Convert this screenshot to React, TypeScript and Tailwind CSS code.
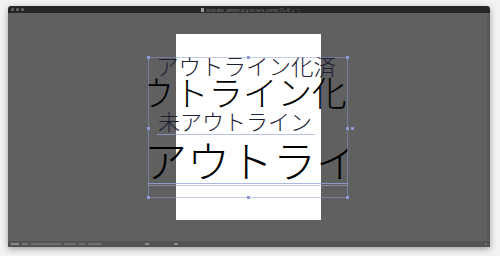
import React from 'react';

const jp = { fontFamily: '"Noto Sans CJK JP", "Noto Sans", sans-serif' };

function Handle({ x, y }: { x: number; y: number }) {
  return (
    <div
      className="absolute w-[3px] h-[3px] bg-[#8e9bd6]"
      style={{ left: x - 1, top: y - 1 }}
    />
  );
}

export default function App() {
  return (
    <div className="w-[500px] h-[256px] bg-[#f2f2f2] pt-[6px] pl-[8px] overflow-hidden">
      <div className="w-[482px] h-[241px] flex flex-col rounded-t-[3px] overflow-hidden shadow-[0_2px_6px_rgba(0,0,0,0.35)]">
        {/* title bar */}
        <div className="h-[7px] bg-[#262626] flex items-center px-[3px] relative">
          <div className="flex gap-[2px]">
            <span className="w-[3px] h-[3px] rounded-full bg-[#6a6a6a]" />
            <span className="w-[3px] h-[3px] rounded-full bg-[#6a6a6a]" />
            <span className="w-[3px] h-[3px] rounded-full bg-[#6a6a6a]" />
          </div>
          <div className="flex-1 flex justify-center items-center gap-[2px] pr-[10px]">
            <span className="w-[3px] h-[4px] bg-[#9a9a9a]" />
            <span className="text-[4px] leading-none text-[#8c8c8c]" style={jp}>
              Illustrator_sample.ai @ 83.56 % (CMYK/プレビュー)
            </span>
          </div>
        </div>

        {/* canvas */}
        <div className="flex-1 bg-[#606060] relative flex">
          <div className="flex-1 relative">
            {/* artboard */}
            <div className="absolute left-[168px] top-[21px] w-[145px] h-[186px] bg-white" />

            {/* text object */}
            <div className="absolute left-[140px] top-[44px] w-[200px] h-[141px] overflow-hidden">
              <div className="flex flex-col font-light">
                <div className="h-[22px] mt-[-3px] pl-[8px] text-[22.5px] leading-[22px] text-[#1d2033] whitespace-nowrap" style={jp}>
                  アウトライン化済
                </div>
                <div className="h-[34px] mt-[-2px] ml-[-43px] text-[34.5px] leading-[34px] text-black whitespace-nowrap" style={jp}>
                  アウトライン化済
                </div>
                <div className="h-[22px] mt-[1px] pl-[10px] text-[22px] leading-[22px] text-[#1d2033] whitespace-nowrap" style={jp}>
                  未アウトライン
                </div>
                <div className="h-[44px] mt-[6px] ml-[-4px] text-[43px] leading-[44px] text-black whitespace-nowrap" style={jp}>
                  アウトライン
                </div>
              </div>
            </div>

            {/* selection guides */}
            <div className="absolute left-[140px] top-[44px] w-[200px] h-[141px] border border-[#8e9bd6]/50" />
            <div className="absolute left-[149px] top-[121px] w-[158px] h-px bg-[#9aa6e0]/70" />
            <div className="absolute left-[140px] top-[170px] w-[200px] h-px bg-[#9aa6e0]/80" />
            <div className="absolute left-[140px] top-[172px] w-[200px] h-px bg-[#9aa6e0]/60" />
            <Handle x={140} y={44} />
            <Handle x={240} y={44} />
            <Handle x={339} y={44} />
            <Handle x={140} y={115} />
            <Handle x={339} y={115} />
            <Handle x={344} y={115} />
            <Handle x={140} y={184} />
            <Handle x={240} y={184} />
            <Handle x={339} y={184} />
          </div>
          {/* scrollbar */}
          <div className="w-[3px] bg-[#585858]" />
        </div>

        {/* status bar */}
        <div className="h-[6px] bg-[#535353] flex items-center gap-[3px] px-[3px]">
          <span className="w-[8px] h-[2px] bg-[#8a8a8a]" />
          <span className="w-[6px] h-[2px] bg-[#7a7a7a]" />
          <span className="w-[30px] h-[2px] bg-[#6e6e6e]" />
          <span className="w-[12px] h-[2px] bg-[#6e6e6e]" />
          <span className="w-[6px] h-[2px] bg-[#6e6e6e]" />
          <span className="w-[14px] h-[2px] bg-[#6e6e6e]" />
          <span className="ml-[40px] w-[4px] h-[2px] bg-[#8a8a8a]" />
          <span className="ml-[22px] w-[4px] h-[2px] bg-[#8a8a8a]" />
          <span className="ml-auto w-[2px] h-[2px] bg-[#6e6e6e]" />
        </div>
      </div>
    </div>
  );
}
